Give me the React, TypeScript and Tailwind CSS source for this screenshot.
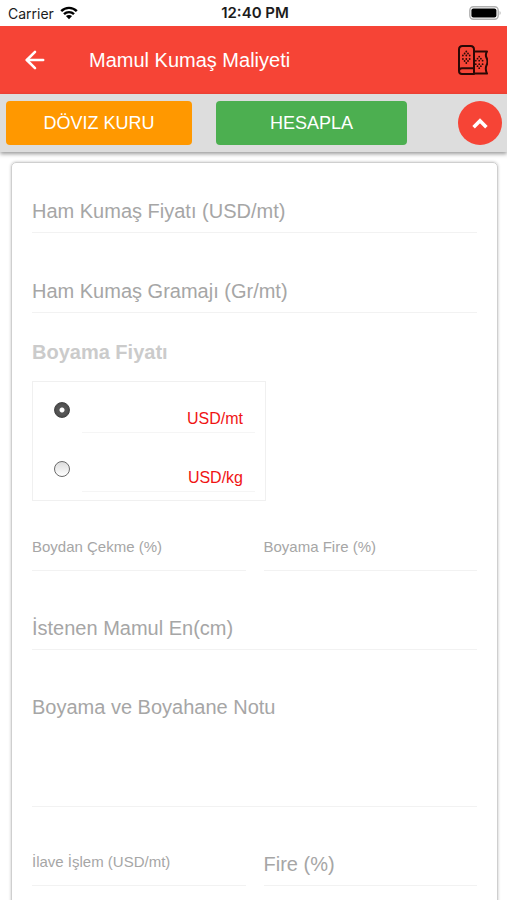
import React, { useState } from 'react';
import { ArrowLeft } from 'lucide-react';

interface FieldProps {
  id: string;
  label: string;
  small?: boolean;
}

const WifiIcon = () => (
  <svg width="18" height="14" viewBox="0 0 18 14" fill="none" stroke="#000" strokeWidth="2.4" aria-hidden="true">
    <path d="M1.2 5.2 C5.6 0.7 12.4 0.7 16.8 5.2" />
    <path d="M4 8.2 C6.8 5.4 11.2 5.4 14 8.2" />
    <path d="M9 13.2 L5.9 10 C7.6 8.5 10.4 8.5 12.1 10 Z" fill="#000" stroke="none" />
  </svg>
);

const BatteryIcon = () => (
  <svg width="33" height="14" viewBox="0 0 33 14" aria-hidden="true">
    <rect x="0.8" y="0.8" width="28.4" height="12.4" rx="3.6" fill="#fff" stroke="#b0b0b0" strokeWidth="1.4" />
    <rect x="2.4" y="2.4" width="25" height="9.2" rx="2" fill="#000" />
    <path d="M30.6 5 C32 5.6 32 8.4 30.6 9 Z" fill="#b0b0b0" />
  </svg>
);

const dots = [
  [0, -5.5], [-2, -3.5], [2, -3.5], [-4, -1.5], [0, -1.5], [4, -1.5],
  [-4, 2], [0, 2], [4, 2], [-2, 4], [2, 4], [0, 6],
];

const FabricIcon = () => (
  <svg width="30" height="30" viewBox="0 0 30 30" fill="none" stroke="#2a0805" strokeWidth="2" strokeLinejoin="round" aria-hidden="true">
    {/* Roll */}
    <path d="M1 26 V4.5 C1 2.3 2.3 1 4.5 1 H12.5 C14.7 1 16 2.3 16 4.5 V29 H4 C2 29 1 27.8 1 26 C1 24.3 2 23.2 4 23.2 H16" />
    {/* Loose cloth */}
    <path d="M16 6.5 H29 C27.4 9 27.6 11 28.6 13 C30 16 29.6 18.4 28.4 20.6 C27.4 23 27.6 25.6 29 28.6 H16" />
    <g fill="#2a0805" stroke="none">
      {dots.map(([x, y]) => (
        <circle key={`a${x}${y}`} cx={8.3 + x * 0.85} cy={12 + y} r="0.9" />
      ))}
      {dots.map(([x, y]) => (
        <circle key={`b${x}${y}`} cx={21.2 + x * 0.85} cy={17.2 + y} r="0.9" />
      ))}
    </g>
  </svg>
);

// The label sits in the same grid cell as the input and hides once there is a value
const Field: React.FC<FieldProps> = ({ id, label, small }) => (
  <div className="grid min-h-[43px] min-w-0 flex-1 border-b border-[#f2f2f2]">
    <input
      id={id}
      type="text"
      placeholder=" "
      className="peer col-start-1 row-start-1 w-full min-w-0 bg-transparent text-[20px] text-[#555] outline-none"
    />
    <label
      htmlFor={id}
      className={`pointer-events-none col-start-1 row-start-1 self-center text-[#a6a6a6] peer-[:not(:placeholder-shown)]:invisible ${
        small ? 'pb-1 text-[15px]' : 'text-[20px]'
      }`}
    >
      {label}
    </label>
  </div>
);

const units = ['USD/mt', 'USD/kg'];

const App: React.FC = () => {
  const [unit, setUnit] = useState('USD/mt');

  return (
    <div className="flex h-screen flex-col bg-white font-['Liberation_Sans',Arial,sans-serif]">
      {/* Status bar */}
      <div className="grid h-[26px] shrink-0 grid-cols-[1fr_auto_1fr] items-center pl-2 pr-[5px] font-['Inter',sans-serif] text-[14px] text-[#1c1c1c]">
        <div className="flex items-center gap-[6px]">
          <span>Carrier</span>
          <WifiIcon />
        </div>
        <span className="text-[15px] font-semibold">12:40 PM</span>
        <div className="flex justify-end">
          <BatteryIcon />
        </div>
      </div>

      <header className="flex h-[68px] shrink-0 items-center bg-[#f64436] pl-[21px] pr-[19px] text-white">
        <button type="button" aria-label="Geri">
          <ArrowLeft size={28} strokeWidth={2.2} />
        </button>
        <h1 className="ml-10 flex-1 text-[20px]">Mamul Kumaş Maliyeti</h1>
        <FabricIcon />
      </header>

      {/* Actions */}
      <div className="relative z-10 flex h-[58px] shrink-0 items-center bg-[#dddddd] pl-[6px] pr-[5px] text-[18px] text-white shadow-[0_2px_4px_rgba(0,0,0,0.4)]">
        <div className="mr-[51px] flex flex-1 gap-6">
          <button type="button" className="h-11 flex-[186] rounded bg-[#ff9800]">DÖVIZ KURU</button>
          <button type="button" className="h-11 flex-[191] rounded bg-[#4caf50]">HESAPLA</button>
        </div>
        <button type="button" aria-label="Yukarı" className="flex size-11 items-center justify-center rounded-full bg-[#f64436]">
          <svg width="16" height="12" viewBox="0 0 16 12" fill="none" stroke="#fff" strokeWidth="3.6" aria-hidden="true">
            <path d="M1.6 10.2 L8 3.8 L14.4 10.2" />
          </svg>
        </button>
      </div>

      <main className="flex-1 overflow-y-auto pb-4 pl-[11px] pr-[9px] pt-[10px] [scrollbar-width:none]">
        <form className="rounded-[5px] border border-[#cfcfcf] px-5 pb-10 pt-[27px] shadow-[0_0_3px_rgba(0,0,0,0.25)]">
          <div className="flex flex-col gap-[37px]">
            <Field id="ham-fiyat" label="Ham Kumaş Fiyatı (USD/mt)" />
            <Field id="ham-gramaj" label="Ham Kumaş Gramajı (Gr/mt)" />
          </div>

          <fieldset className="mt-[27px]">
            <legend className="text-[20px] font-bold leading-6 text-[#cbcbcb]">Boyama Fiyatı</legend>
            <div className="mt-[17px] w-[234px] border border-[#f0f0f0]">
              {units.map((u) => (
                <div key={u} className="flex h-[59px] items-start pl-[21px] pr-[10px] pt-5">
                  <input
                    type="radio"
                    name="boyama-birim"
                    aria-label={u}
                    checked={unit === u}
                    onChange={() => setUnit(u)}
                    className="size-4 shrink-0 appearance-none rounded-full border border-[#6a6a6a] bg-linear-to-b from-[#dcdcdc] to-white checked:border-[#444] checked:bg-[radial-gradient(circle,#fff_0,#fff_2px,#555_3px,#555_5px,#444_8px)]"
                  />
                  <div className="ml-3 flex h-[31px] min-w-0 flex-1 items-center border-b border-[#f5f5f5] pr-3 pt-1">
                    <input id={u} type="text" className="h-full min-w-0 flex-1 bg-transparent text-[16px] outline-none" />
                    <label htmlFor={u} className="text-[16px] text-[#f01414]">{u}</label>
                  </div>
                </div>
              ))}
            </div>
          </fieldset>

          <div className="mt-[27px] flex gap-[18px]">
            <Field id="boydan-cekme" label="Boydan Çekme (%)" small />
            <Field id="boyama-fire" label="Boyama Fire (%)" small />
          </div>

          <div className="mt-9 flex">
            <Field id="mamul-en" label="İstenen Mamul En(cm)" />
          </div>

          <div className="mt-[37px] grid h-[120px] border-b border-[#f2f2f2]">
            <textarea
              id="boyahane-notu"
              placeholder=" "
              className="peer col-start-1 row-start-1 w-full resize-none bg-transparent pt-2 text-[20px] leading-6 text-[#555] outline-none"
            />
            <label
              htmlFor="boyahane-notu"
              className="pointer-events-none col-start-1 row-start-1 self-start pt-2 text-[20px] leading-6 text-[#a6a6a6] peer-[:not(:placeholder-shown)]:invisible"
            >
              Boyama ve Boyahane Notu
            </label>
          </div>

          <div className="mt-9 flex gap-[18px]">
            <Field id="ilave-islem" label="İlave İşlem (USD/mt)" small />
            <Field id="fire" label="Fire (%)" />
          </div>
        </form>
      </main>
    </div>
  );
};

export default App;
